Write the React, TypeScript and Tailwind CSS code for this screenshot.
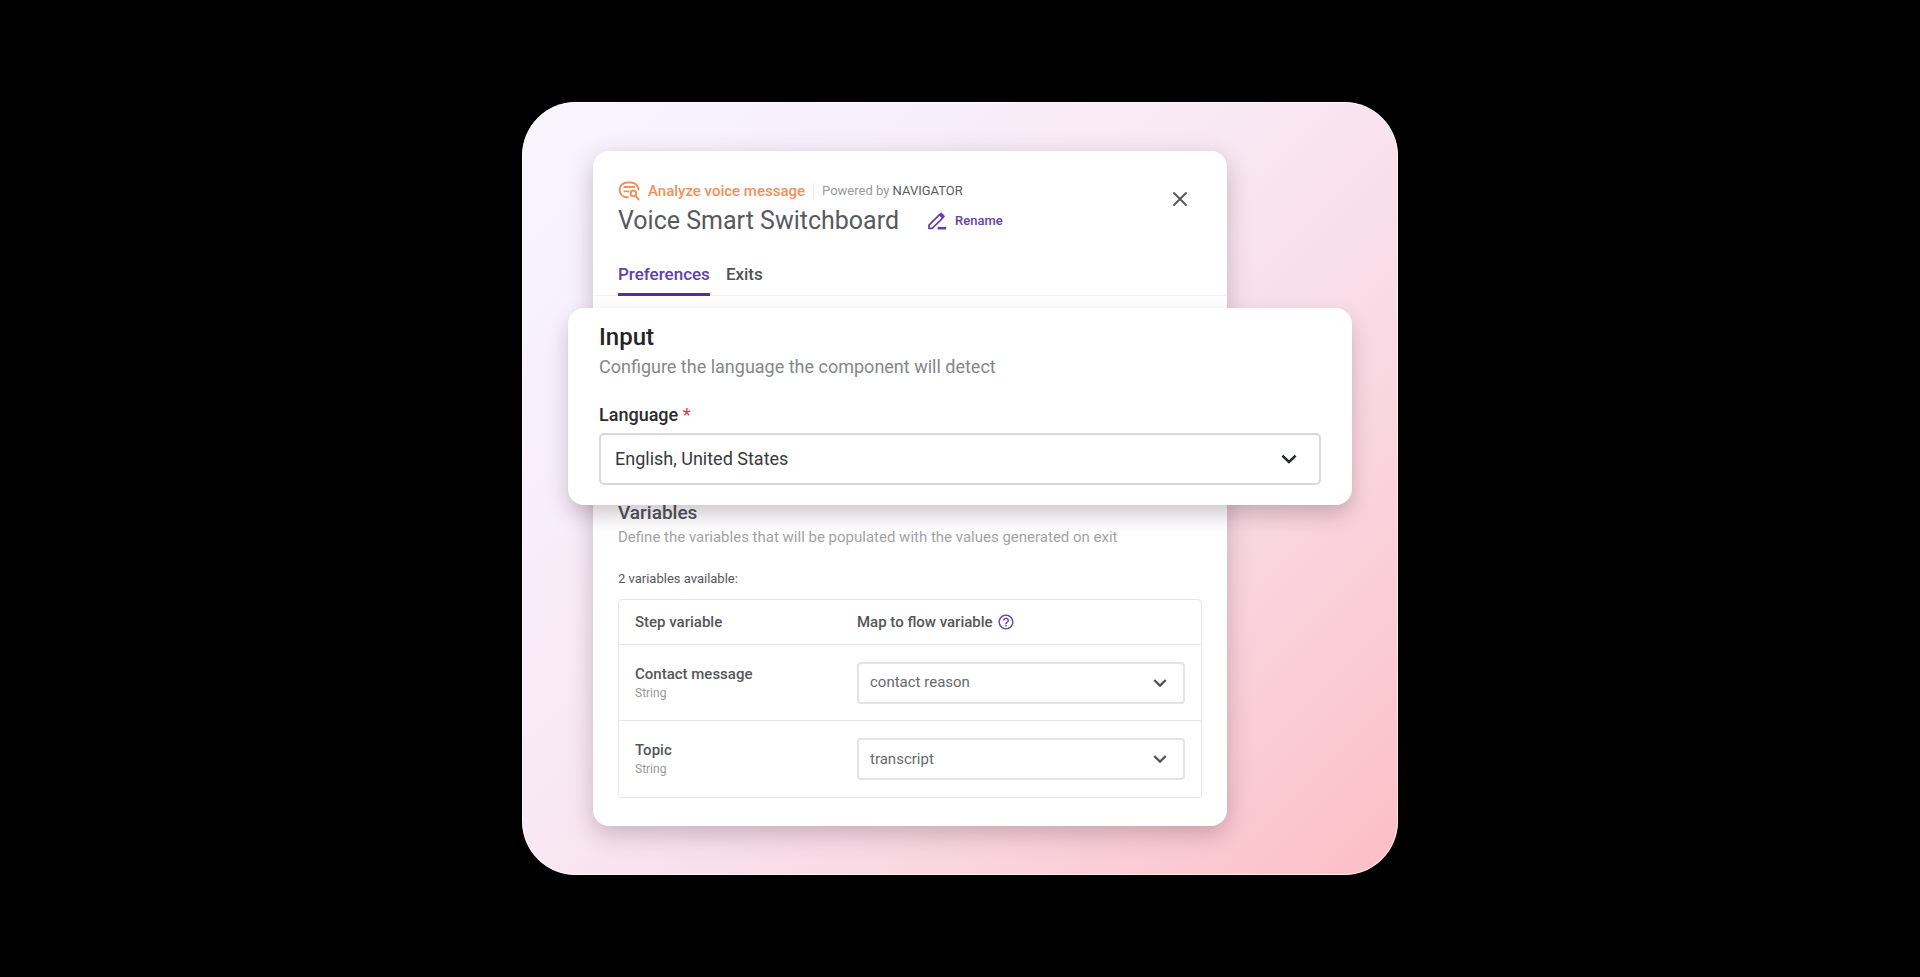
import React from "react";
import { MdHelpOutline } from "react-icons/md";

interface Variable {
  id: string;
  name: string;
  type: string;
  value: string;
}

const variables: Variable[] = [
  { id: "contact", name: "Contact message", type: "String", value: "contact reason" },
  { id: "topic", name: "Topic", type: "String", value: "transcript" },
];

const AnalyzeIcon: React.FC = () => (
  <svg
    width="22"
    height="20"
    viewBox="0 0 22 20"
    fill="none"
    stroke="currentColor"
    strokeWidth="2"
    strokeLinecap="round"
    aria-hidden="true"
  >
    <path d="M20.6 8.4C19.8 4 16.8 1.4 12.6 1.4H9.6C5 1.4 1.6 4.6 1.6 8.8s3 7.2 7.4 7.4h.8" />
    <path d="M6.4 6h9.8M6.4 10.4h4" strokeWidth="1.8" />
    <circle cx="15.4" cy="12.4" r="2.8" />
    <path d="m17.6 14.8 3 3.6" />
  </svg>
);

const PenIcon: React.FC = () => (
  <svg
    width="20"
    height="20"
    viewBox="0 0 20 20"
    fill="none"
    stroke="currentColor"
    strokeLinejoin="round"
    aria-hidden="true"
  >
    <path d="M2 17.4v-3.2L12.6 3.6l3.2 3.2L5.2 17.4Z" strokeWidth="1.7" />
    <path d="m12.4 3.4 1.8-1.6 3.3 3.3-1.6 1.8Z" fill="currentColor" strokeWidth="1" />
    <path d="M10.6 17.2h8.6" strokeWidth="2.6" />
  </svg>
);

const Chevron: React.FC<{ className: string }> = ({ className }) => (
  <svg
    className={className}
    viewBox="0 0 16 16"
    fill="none"
    stroke="currentColor"
    strokeWidth="2.6"
    aria-hidden="true"
  >
    <path d="m1.4 4.6 6.6 6.4 6.6-6.4" />
  </svg>
);

const InputCard: React.FC = () => (
  <section className="relative z-10 -ml-[25px] -mr-[125px] rounded-2xl bg-white px-[31px] pt-[15px] pb-5 shadow-[0_10px_22px_-2px_rgba(40,15,35,0.25)]">
    <h2 className="text-2xl leading-7 font-medium text-[#222529]">Input</h2>
    <p className="mt-1 text-lg leading-6 text-[#85878a]">
      Configure the language the component will detect
    </p>
    <label
      htmlFor="language"
      className="mt-6 block text-lg leading-6 font-medium text-[#2a2c30]"
    >
      Language <span className="text-[#dc4650]">*</span>
    </label>
    <div className="relative mt-1.5">
      <select
        id="language"
        className="block h-[52px] w-full appearance-none rounded-[5px] border-2 border-[#d9d9db] bg-white px-3.5 text-lg text-[#36393e]"
      >
        <option>English, United States</option>
      </select>
      <Chevron className="pointer-events-none absolute top-[18px] right-6 h-4 w-4 text-[#26282b]" />
    </div>
  </section>
);

const VariablesTable: React.FC = () => (
  <table className="mt-2.5 w-full border-separate border-spacing-0 rounded border border-[#e6e6e8] text-left text-[15px] text-[#555659]">
    <thead>
      <tr className="h-[45px]">
        <th className="w-[238px] border-b border-[#e6e6e8] pl-4 font-medium">
          Step variable
        </th>
        <th className="border-b border-[#e6e6e8] font-medium">
          <span className="flex items-center gap-1">
            Map to flow variable
            <MdHelpOutline className="h-[18px] w-[18px] text-[#6a4bb0]" />
          </span>
        </th>
      </tr>
    </thead>
    <tbody className="[&>tr:not(:last-child)>td]:border-b">
      {variables.map((variable) => (
        <tr key={variable.id} className="h-[76px]">
          <td className="border-[#e6e6e8] pl-4">
            <label
              htmlFor={variable.id}
              className="block leading-5 font-medium"
            >
              {variable.name}
            </label>
            <span className="block text-xs leading-[18px] text-[#97999b]">
              {variable.type}
            </span>
          </td>
          <td className="border-[#e6e6e8] pr-4">
            <div className="relative">
              <select
                id={variable.id}
                className="block h-[42px] w-full appearance-none rounded border-2 border-[#e3e3e5] bg-white px-[11px] text-[15px] text-[#68696c]"
              >
                <option>{variable.value}</option>
              </select>
              <Chevron className="pointer-events-none absolute top-3.5 right-[18px] h-3.5 w-3.5 text-[#505255]" />
            </div>
          </td>
        </tr>
      ))}
    </tbody>
  </table>
);

const Panel: React.FC = () => (
  <main className="mr-[171px] ml-[71px] rounded-2xl bg-white pb-7 shadow-[0_8px_24px_rgba(60,30,50,0.26)]">
    <header className="flex items-start justify-between border-b border-[#f1f1f3] px-[25px] pt-[30px]">
      <div>
        <div className="flex items-center text-xs leading-5">
          <span className="flex items-center gap-2 text-[15px] font-medium text-[#f0905a]">
            <AnalyzeIcon />
            Analyze voice message
          </span>
          <span className="mx-2 h-4 border-l border-[#ececee]" />
          <span className="text-[13px] text-[#97999b]">
            Powered by <span className="text-[#5a5c5f]">NAVIGATOR</span>
          </span>
        </div>
        <div className="flex items-center gap-7">
          <h1 className="text-[25px] leading-10 text-[#58595c]">
            Voice Smart Switchboard
          </h1>
          <button className="flex items-center gap-2 text-[13px] font-medium text-[#643fa8]">
            <PenIcon />
            Rename
          </button>
        </div>
        <nav className="mt-[22px] flex gap-4 text-[17px] leading-[22px] font-medium">
          <a
            href="#preferences"
            className="-mb-px border-b-[3px] border-[#52309c] pb-2 text-[#6140a8]"
          >
            Preferences
          </a>
          <a href="#exits" className="text-[#505255]">
            Exits
          </a>
        </nav>
      </div>
      <button aria-label="Close" className="px-3.5 py-2.5 text-[#56585b]">
        <svg
          className="h-4 w-4"
          viewBox="0 0 16 16"
          stroke="currentColor"
          strokeWidth="2"
          strokeLinecap="round"
        >
          <path d="m2 2 12 12M14 2l-12 12" />
        </svg>
      </button>
    </header>
    <div className="pt-3">
      <InputCard />
    </div>
    <section className="-mt-1 px-[25px]">
      <h2 className="text-[19px] leading-6 font-medium text-[#505255]">
        Variables
      </h2>
      <p className="text-[15px] leading-6 text-[#a2a3a5]">
        Define the variables that will be populated with the values generated
        on exit
      </p>
      <p className="mt-5 text-[13px] leading-5 text-[#56585b]">
        2 variables available:
      </p>
      <VariablesTable />
    </section>
  </main>
);

export default function App() {
  return (
    <div className="flex min-h-screen items-center justify-center bg-black font-[Roboto,sans-serif]">
      <div className="w-full max-w-[876px] rounded-[54px] bg-[linear-gradient(135deg,#f8f5ff_0%,#f8effd_20%,#f8e8f3_45%,#f9d9e3_68%,#fcbec5_100%)] py-[49px] shadow-[inset_0_0_0_1px_rgba(255,255,255,0.6)]">
        <Panel />
      </div>
    </div>
  );
}
